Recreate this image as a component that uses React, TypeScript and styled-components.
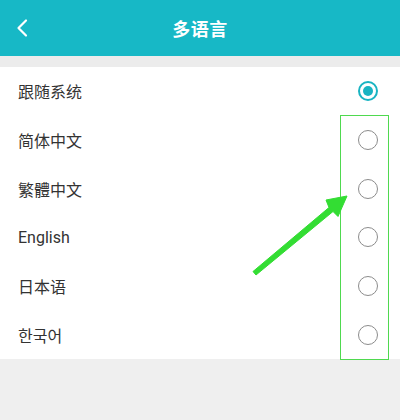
import styled, { createGlobalStyle } from "styled-components";

const GlobalStyle = createGlobalStyle`
html, body {
  margin: 0;
  padding: 0;
  background: #efefef;
}
body {
  font-family: Roboto, "Noto Sans CJK SC", "Noto Sans CJK KR", sans-serif;
}
`;

const Screen = styled.div`
position: relative;
width: 400px;
height: 420px;
overflow: hidden;
background: #efefef;
display: flex;
flex-direction: column;
`;

const Header = styled.header`
height: 56px;
background: #17b8c6;
display: grid;
grid-template-columns: 56px 1fr 56px;
align-items: center;
color: #fff;
`;

const BackButton = styled.div`
display: flex;
align-items: center;
padding-left: 14px;
height: 100%;
`;

const Title = styled.h1`
margin: 0;
text-align: center;
font-size: 18px;
font-weight: 600;
letter-spacing: 0.5px;
`;

const Spacer = styled.div`
height: 11px;
background: #ececec;
`;

const List = styled.ul`
margin: 0;
padding: 0;
list-style: none;
background: #fff;
`;

const Row = styled.li`
height: 48.67px;
display: flex;
align-items: center;
justify-content: space-between;
padding: 0 22px 0 18px;
font-size: 16px;
color: #333;
`;

const Radio = styled.span<{ $checked: boolean }>`
box-sizing: border-box;
width: 20px;
height: 20px;
border-radius: 50%;
border: ${(props) => props.$checked ? "2.2px solid #19b4c2" : "1.6px solid #8c8c8c"};
display: flex;
align-items: center;
justify-content: center;

&::after {
  content: "";
  width: 10px;
  height: 10px;
  border-radius: 50%;
  background: #19b4c2;
  display: ${(props) => props.$checked ? "block" : "none"};
}
`;

const Highlight = styled.div`
position: absolute;
left: 340px;
top: 115px;
width: 47px;
height: 243px;
border: 1.5px solid #4fd94f;
`;

const Arrow = styled.svg`
position: absolute;
left: 0;
top: 0;
pointer-events: none;
`;

const languages = ["跟随系统", "简体中文", "繁體中文", "English", "日本语", "한국어"];

export default function App() {
    return (
        <Screen>
            <GlobalStyle />
            <Header>
                <BackButton>
                    <svg width="16" height="20" viewBox="0 0 16 20">
                        <path d="M12 2.5 L4.5 10 L12 17.5" fill="none" stroke="#fff" strokeWidth="2.2" strokeLinecap="round" strokeLinejoin="round" />
                    </svg>
                </BackButton>
                <Title>多语言</Title>
                <div />
            </Header>
            <Spacer />
            <List>
                {languages.map((lang, i) => (
                    <Row key={lang}>
                        <span>{lang}</span>
                        <Radio $checked={i === 0} />
                    </Row>
                ))}
            </List>
            <Highlight />
            <Arrow width="400" height="420" viewBox="0 0 400 420">
                <path d="M253 271.5 L329 207.5 L326 200 L347 196 L338 216.5 L333 211.5 L256 275 Z" fill="#33dd33" stroke="#33dd33" strokeWidth="1" strokeLinejoin="round" />
            </Arrow>
        </Screen>
    );
}
